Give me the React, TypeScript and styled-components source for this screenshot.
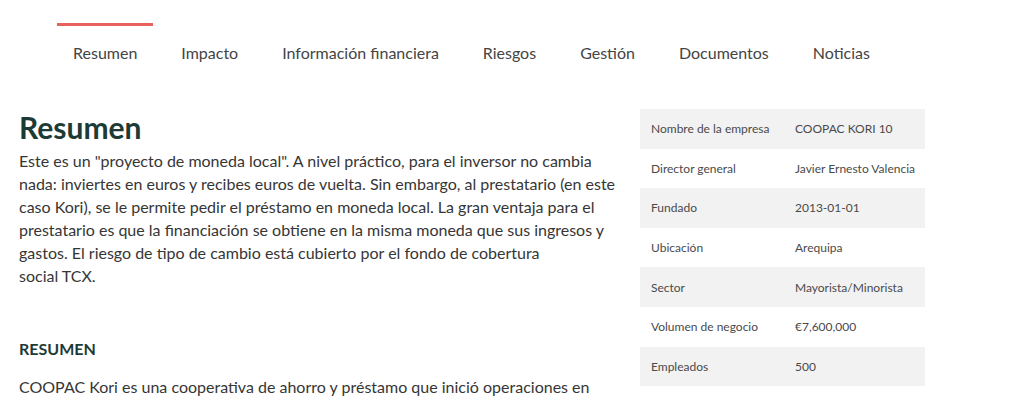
import React from 'react';
import styled, { createGlobalStyle } from 'styled-components';

const GlobalStyle = createGlobalStyle`
  body {
    margin: 0;
    background: #ffffff;
    font-family: 'Lato', 'Noto Sans', sans-serif;
    color: #333;
  }
`;

// Tabs
const TabBar = styled.nav`
  display: flex;
  gap: 12px;
  padding: 23px 0 0 57px;
`;

const Tab = styled.div<{ $active?: boolean }>`
  border-top: 3px solid ${(p) => (p.$active ? '#e8615f' : 'transparent')};
  padding: 16px 16px 0;
  font-size: 16px;
  line-height: 22px;
  color: #444;
  white-space: nowrap;
`;

// Main layout
const Main = styled.div`
  display: grid;
  grid-template-columns: 600px 285px;
  column-gap: 21px;
  align-items: start;
  padding: 45px 0 0 19px;
`;

const Content = styled.section``;

const Heading = styled.h1`
  margin: -1px 0 3px;
  font-size: 30px;
  line-height: 38px;
  font-weight: 700;
  color: #1d3b36;
`;

const Paragraph = styled.p`
  margin: 0;
  font-size: 16px;
  line-height: 23px;
  color: #363636;
`;

const SubHeading = styled.h2`
  margin: 50px 0 0;
  font-size: 16px;
  line-height: 24px;
  font-weight: 700;
  color: #1d3b36;
`;

const SubParagraph = styled(Paragraph)`
  margin-top: 14px;
`;

// Facts table
const Facts = styled.div`
  display: flex;
  flex-direction: column;
`;

const FactRow = styled.div<{ $shaded?: boolean }>`
  display: grid;
  grid-template-columns: 144px 1fr;
  align-items: center;
  height: 39.6px;
  padding-left: 11px;
  background: ${(p) => (p.$shaded ? '#f2f2f2' : 'transparent')};
  font-size: 12px;
  color: #4a4a4a;
`;

const tabs = [
  'Resumen',
  'Impacto',
  'Información financiera',
  'Riesgos',
  'Gestión',
  'Documentos',
  'Noticias',
];

const facts = [
  ['Nombre de la empresa', 'COOPAC KORI 10'],
  ['Director general', 'Javier Ernesto Valencia'],
  ['Fundado', '2013-01-01'],
  ['Ubicación', 'Arequipa'],
  ['Sector', 'Mayorista/Minorista'],
  ['Volumen de negocio', '€7,600,000'],
  ['Empleados', '500'],
];

const App: React.FC = () => {
  return (
    <>
      <GlobalStyle />
      <TabBar>
        {tabs.map((t, i) => (
          <Tab key={t} $active={i === 0}>
            {t}
          </Tab>
        ))}
      </TabBar>

      <Main>
        <Content>
          <Heading>Resumen</Heading>
          <Paragraph>
            Este es un "proyecto de moneda local". A nivel práctico, para el inversor no cambia
            nada: inviertes en euros y recibes euros de vuelta. Sin embargo, al prestatario (en este
            caso Kori), se le permite pedir el préstamo en moneda local. La gran ventaja para el
            prestatario es que la financiación se obtiene en la misma moneda que sus ingresos y
            gastos. El riesgo de tipo de cambio está cubierto por el fondo de cobertura
            <br />
            social TCX.
          </Paragraph>

          <SubHeading>RESUMEN</SubHeading>
          <SubParagraph>
            COOPAC Kori es una cooperativa de ahorro y préstamo que inició operaciones en
          </SubParagraph>
        </Content>

        <Facts>
          {facts.map(([label, value], i) => (
            <FactRow key={label} $shaded={i % 2 === 0}>
              <span>{label}</span>
              <span>{value}</span>
            </FactRow>
          ))}
        </Facts>
      </Main>
    </>
  );
};

export default App;
